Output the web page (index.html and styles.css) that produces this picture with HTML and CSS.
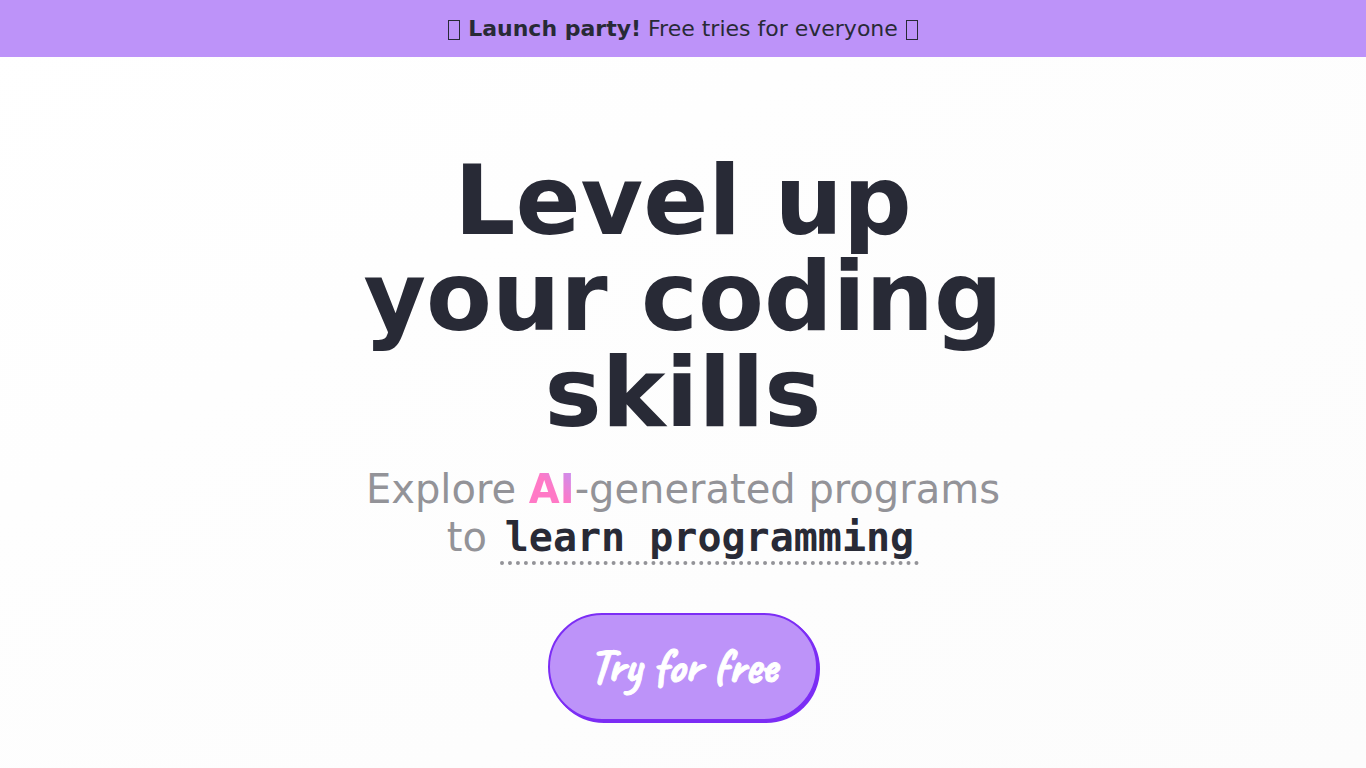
FILE: index.html
```html
<!DOCTYPE html>
<html lang="en">
<head>
  <meta charset="UTF-8" />
  <meta name="viewport" content="width=device-width, initial-scale=1.0"/>
  <title>Level up your coding skills</title>
  <link rel="stylesheet" href="styles.css">
</head>
<body>

  <!-- Announcement -->
  <div class="banner">
    <span class="glyph-box"></span> <strong>Launch party!</strong> Free tries for everyone <span class="glyph-box"></span>
  </div>

  <!-- Hero -->
  <main class="hero">
    <h1>Level up your coding skills</h1>
    <p class="subtitle">
      Explore <span class="ai">AI</span>-generated programs to
      <span class="typed">learn programming</span>
    </p>
    <a href="#try" class="cta">Try for free</a>
  </main>

</body>
</html>
```

FILE: styles.css
```css
* {
  box-sizing: border-box;
  margin: 0;
  padding: 0;
}

body {
  min-height: 100vh;
  background: linear-gradient(to bottom right, #ffffff, #fcfcfc);
  color: #282a36;
  font-family: 'DejaVu Sans', sans-serif;
}

.banner {
  padding: 16px;
  background-color: #bd93f9;
  font-size: 22px;
  line-height: 25px;
  text-align: center;
}

.glyph-box {
  display: inline-block;
  width: 12px;
  height: 20px;
  margin: 0 1px;
  border: 1px solid #282a36;
  vertical-align: -4px;
}

.hero {
  display: flex;
  flex-direction: column;
  align-items: center;
  max-width: 704px;
  margin: 0 auto;
  padding: 96px 32px 40px;
  text-align: center;
}

h1 {
  font-size: 96px;
  line-height: 96px;
  font-weight: 700;
}

.subtitle {
  margin-top: 24px;
  color: #939398;
  font-size: 40px;
  line-height: 48px;
}

.ai {
  background: linear-gradient(to top right, #ff79c6 50%, #bd93f9);
  -webkit-background-clip: text;
  background-clip: text;
  color: transparent;
  font-weight: 700;
}

.typed {
  padding: 0 5px 1px;
  border-bottom: 4px dotted #939398;
  color: #282a36;
  font-family: 'DejaVu Sans Mono', monospace;
  font-weight: 700;
}

.cta {
  margin-top: 52px;
  padding: 23px 39px 25px;
  border: 2px solid #7c2df5;
  border-radius: 54px;
  background-color: #bd93f9;
  box-shadow: 2px 2px 0 #7c2df5;
  color: #ffffff;
  font-family: 'Caveat', cursive;
  font-size: 48px;
  line-height: 56px;
  font-weight: 700;
  text-decoration: none;
  -webkit-text-stroke: 1px #ffffff;
}
```
